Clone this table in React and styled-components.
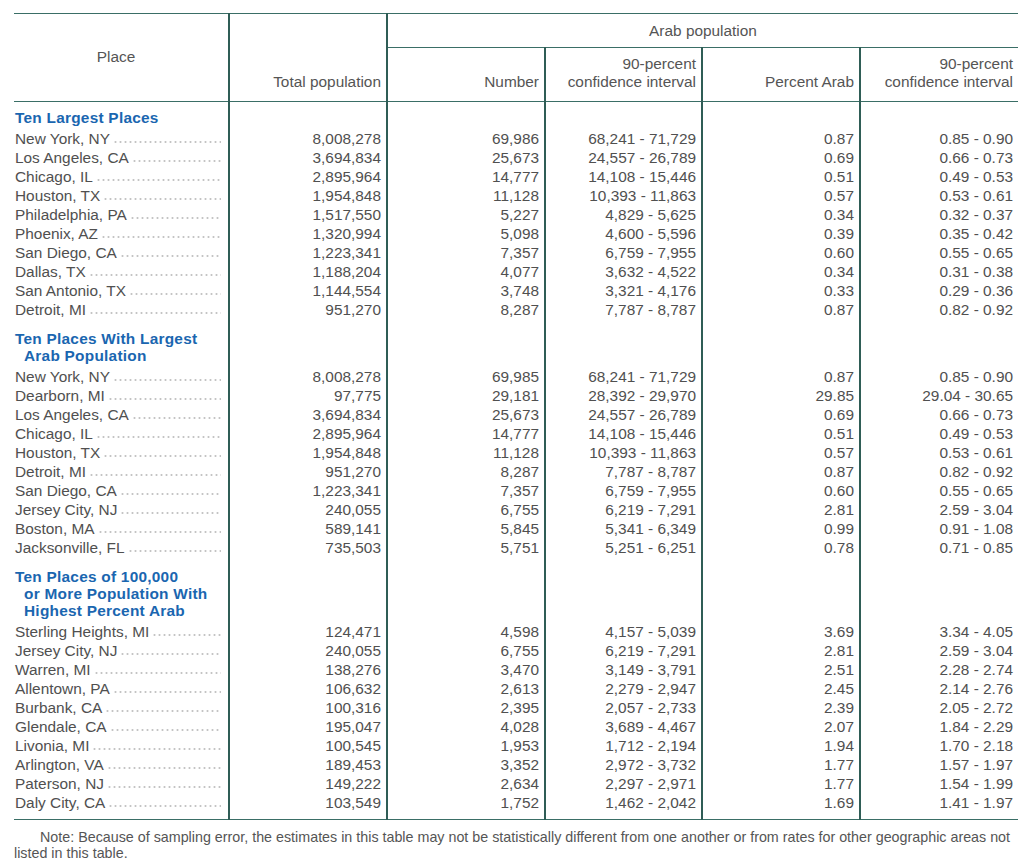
import React from "react";
import styled, { createGlobalStyle } from "styled-components";

const Global = createGlobalStyle`
  html, body { margin: 0; padding: 0; background: #fff; }
  body { font-family: "Liberation Sans", Arial, sans-serif; color: #505050; }
`;

const Page = styled.div`
  padding: 13px 12px 0 14px;
  width: 1004px;
`;

const Table = styled.table`
  width: 1004px;
  table-layout: fixed;
  border-collapse: collapse;
  border-top: 1px solid #3a6e66;
  border-bottom: 1px solid #3a6e66;
  font-size: 15.4px;
`;

const Col = styled.col``;

const HeadCell = styled.th`
  font-weight: normal;
  color: #555;
  border-left: ${(p) => (p.$first ? "none" : "2px solid #2f5d56")};
  border-bottom: 1px solid #3a6e66;
  text-align: ${(p) => p.$align || "right"};
  vertical-align: ${(p) => p.$valign || "bottom"};
  padding: ${(p) => p.$pad || "0 5px 10px 0"};
  line-height: 18px;
  height: ${(p) => p.$h || "auto"};
`;

const Cell = styled.td`
  border-left: ${(p) => (p.$first ? "none" : "2px solid #2f5d56")};
  text-align: right;
  padding: 0 5px 0 0;
  height: 19px;
  line-height: 19px;
  white-space: nowrap;
  padding-bottom: ${(p) => (p.$last ? "7px" : "0")};
`;

const PlaceCell = styled.td`
  padding: 0 7px 0 1px;
  height: 19px;
  line-height: 19px;
  padding-bottom: ${(p) => (p.$last ? "7px" : "0")};
`;

const PlaceInner = styled.div`
  display: flex;
  align-items: baseline;
  white-space: nowrap;
`;

const Leader = styled.span`
  flex: 1;
  height: 4px;
  margin-left: 3px;
  background-image: radial-gradient(circle, #c4c4c4 0.8px, transparent 1.3px);
  background-size: 5px 4px;
  background-repeat: repeat-x;
  background-position: 0 0;
`;

const SectionCell = styled.td`
  padding: ${(p) => (p.$first ? "7px" : "11px")} 0 3px 1px;
  color: #1a66b0;
  font-weight: bold;
  line-height: 17px;
  letter-spacing: 0.25px;
`;

const SectionLine = styled.div`
  padding-left: ${(p) => (p.$indent ? "9px" : "0")};
`;

const BlankCell = styled.td`
  border-left: 2px solid #2f5d56;
`;

const Note = styled.p`
  margin: 9px 0 0 0;
  font-size: 14.3px;
  line-height: 16px;
  color: #555;
  text-indent: 26px;
  width: 1016px;
  white-space: nowrap;
`;

const sections = [
  {
    title: ["Ten Largest Places"],
    rows: [
      ["New York, NY", "8,008,278", "69,986", "68,241 - 71,729", "0.87", "0.85 - 0.90"],
      ["Los Angeles, CA", "3,694,834", "25,673", "24,557 - 26,789", "0.69", "0.66 - 0.73"],
      ["Chicago, IL", "2,895,964", "14,777", "14,108 - 15,446", "0.51", "0.49 - 0.53"],
      ["Houston, TX", "1,954,848", "11,128", "10,393 - 11,863", "0.57", "0.53 - 0.61"],
      ["Philadelphia, PA", "1,517,550", "5,227", "4,829 - 5,625", "0.34", "0.32 - 0.37"],
      ["Phoenix, AZ", "1,320,994", "5,098", "4,600 - 5,596", "0.39", "0.35 - 0.42"],
      ["San Diego, CA", "1,223,341", "7,357", "6,759 - 7,955", "0.60", "0.55 - 0.65"],
      ["Dallas, TX", "1,188,204", "4,077", "3,632 - 4,522", "0.34", "0.31 - 0.38"],
      ["San Antonio, TX", "1,144,554", "3,748", "3,321 - 4,176", "0.33", "0.29 - 0.36"],
      ["Detroit, MI", "951,270", "8,287", "7,787 - 8,787", "0.87", "0.82 - 0.92"],
    ],
  },
  {
    title: ["Ten Places With Largest", "Arab Population"],
    rows: [
      ["New York, NY", "8,008,278", "69,985", "68,241 - 71,729", "0.87", "0.85 - 0.90"],
      ["Dearborn, MI", "97,775", "29,181", "28,392 - 29,970", "29.85", "29.04 - 30.65"],
      ["Los Angeles, CA", "3,694,834", "25,673", "24,557 - 26,789", "0.69", "0.66 - 0.73"],
      ["Chicago, IL", "2,895,964", "14,777", "14,108 - 15,446", "0.51", "0.49 - 0.53"],
      ["Houston, TX", "1,954,848", "11,128", "10,393 - 11,863", "0.57", "0.53 - 0.61"],
      ["Detroit, MI", "951,270", "8,287", "7,787 - 8,787", "0.87", "0.82 - 0.92"],
      ["San Diego, CA", "1,223,341", "7,357", "6,759 - 7,955", "0.60", "0.55 - 0.65"],
      ["Jersey City, NJ", "240,055", "6,755", "6,219 - 7,291", "2.81", "2.59 - 3.04"],
      ["Boston, MA", "589,141", "5,845", "5,341 - 6,349", "0.99", "0.91 - 1.08"],
      ["Jacksonville, FL", "735,503", "5,751", "5,251 - 6,251", "0.78", "0.71 - 0.85"],
    ],
  },
  {
    title: ["Ten Places of 100,000", "or More Population With", "Highest Percent Arab"],
    rows: [
      ["Sterling Heights, MI", "124,471", "4,598", "4,157 - 5,039", "3.69", "3.34 - 4.05"],
      ["Jersey City, NJ", "240,055", "6,755", "6,219 - 7,291", "2.81", "2.59 - 3.04"],
      ["Warren, MI", "138,276", "3,470", "3,149 - 3,791", "2.51", "2.28 - 2.74"],
      ["Allentown, PA", "106,632", "2,613", "2,279 - 2,947", "2.45", "2.14 - 2.76"],
      ["Burbank, CA", "100,316", "2,395", "2,057 - 2,733", "2.39", "2.05 - 2.72"],
      ["Glendale, CA", "195,047", "4,028", "3,689 - 4,467", "2.07", "1.84 - 2.29"],
      ["Livonia, MI", "100,545", "1,953", "1,712 - 2,194", "1.94", "1.70 - 2.18"],
      ["Arlington, VA", "189,453", "3,352", "2,972 - 3,732", "1.77", "1.57 - 1.97"],
      ["Paterson, NJ", "149,222", "2,634", "2,297 - 2,971", "1.77", "1.54 - 1.99"],
      ["Daly City, CA", "103,549", "1,752", "1,462 - 2,042", "1.69", "1.41 - 1.97"],
    ],
  },
];

export default function App() {
  return (
    <Page>
      <Global />
      <Table>
        <colgroup>
          <Col style={{ width: 215 }} />
          <Col style={{ width: 158 }} />
          <Col style={{ width: 158 }} />
          <Col style={{ width: 157 }} />
          <Col style={{ width: 158 }} />
          <Col style={{ width: 158 }} />
        </colgroup>
        <thead>
          <tr>
            <HeadCell $first rowSpan={2} $align="center" $valign="top" $pad="34px 10px 0 0">
              Place
            </HeadCell>
            <HeadCell rowSpan={2} $pad="0 5px 10px 0">
              Total population
            </HeadCell>
            <HeadCell colSpan={4} $align="center" $valign="middle" $pad="0" $h="33px">
              Arab population
            </HeadCell>
          </tr>
          <tr>
            <HeadCell $h="43px">Number</HeadCell>
            <HeadCell>
              90-percent
              <br />
              confidence interval
            </HeadCell>
            <HeadCell>Percent Arab</HeadCell>
            <HeadCell>
              90-percent
              <br />
              confidence interval
            </HeadCell>
          </tr>
        </thead>
        {sections.map((s, si) => (
          <tbody key={si}>
            <tr>
              <SectionCell $first={si === 0}>
                {s.title.map((t, ti) => (
                  <SectionLine key={ti} $indent={ti > 0}>
                    {t}
                  </SectionLine>
                ))}
              </SectionCell>
              <BlankCell />
              <BlankCell />
              <BlankCell />
              <BlankCell />
              <BlankCell />
            </tr>
            {s.rows.map((r, ri) => {
              const last = si === sections.length - 1 && ri === s.rows.length - 1;
              return (
                <tr key={ri}>
                  <PlaceCell $last={last}>
                    <PlaceInner>
                      {r[0]}
                      <Leader />
                    </PlaceInner>
                  </PlaceCell>
                  {r.slice(1).map((v, vi) => (
                    <Cell key={vi} $last={last}>
                      {v}
                    </Cell>
                  ))}
                </tr>
              );
            })}
          </tbody>
        ))}
      </Table>
      <Note>
        Note: Because of sampling error, the estimates in this table may not be statistically different from one another or from rates for other geographic areas not
        <br />
        listed in this table.
      </Note>
    </Page>
  );
}
